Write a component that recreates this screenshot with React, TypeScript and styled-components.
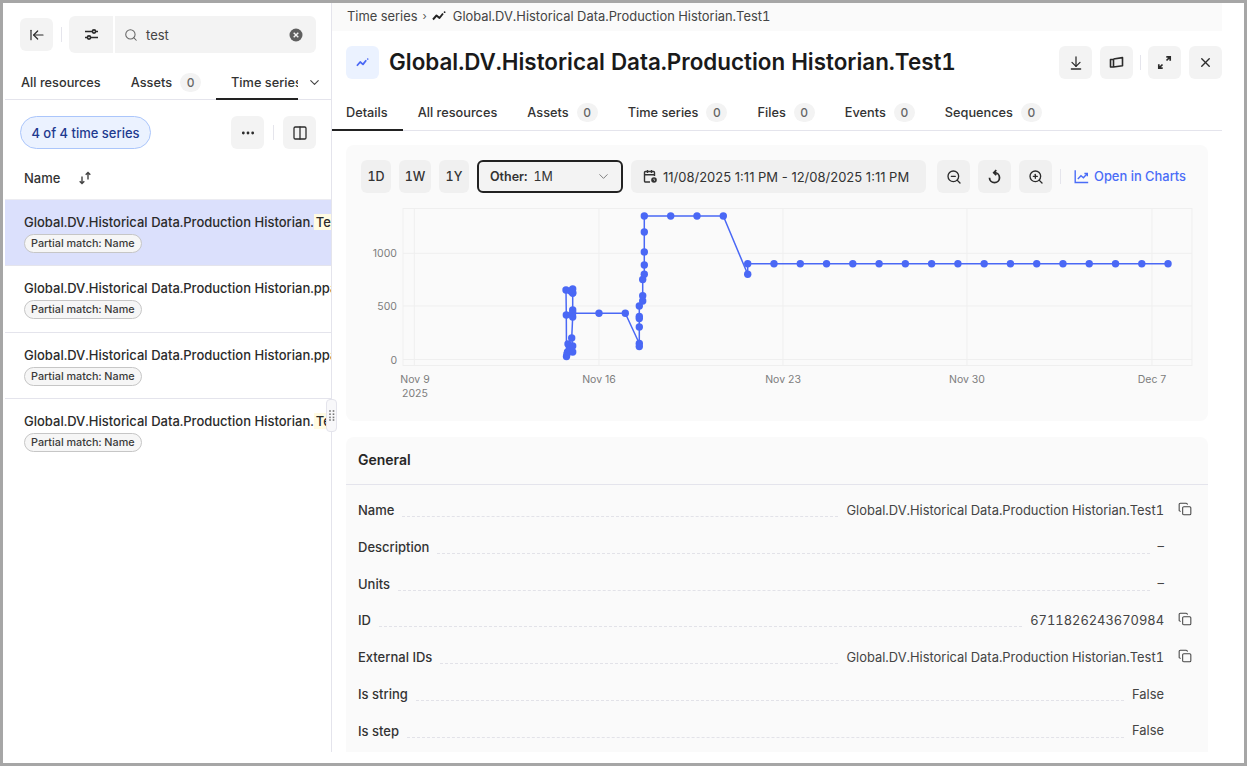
import { ReactNode } from 'react'
import styled, { createGlobalStyle } from 'styled-components'
import {
  ArrowDownToLine,
  ArrowLeftToLine,
  ChevronDown,
  Columns2,
  Copy,
  Ellipsis,
  Search,
  X,
  ZoomIn,
  ZoomOut,
} from 'lucide-react'

const GlobalStyle = createGlobalStyle`
  html, body {
    margin: 0;
    padding: 0;
    background: #fff;
  }
  * {
    box-sizing: border-box;
  }
  body {
    font-family: Inter, "Noto Sans", sans-serif;
    font-variant-numeric: tabular-nums;
    color: #2b2b2b;
    overflow: hidden;
  }
`

const Frame = styled.div`
  width: 1247px;
  height: 766px;
  border: 3px solid #a6a6a6;
  background: #fff;
  display: flex;
  overflow: hidden;
`
const LeftPanel = styled.aside`
  width: 327px;
  height: 749px;
  flex: none;
  margin-left: 2px;
  position: relative;
  border-right: 1px solid #e4e4ec;
`
const ToolRow = styled.div`
  display: flex;
  align-items: center;
  height: 37px;
  margin: 13px 0 0 15px;
`
const IconButton = styled.button<{ $h?: number; $w?: number }>`
  width: ${({ $w }) => $w ?? 33}px;
  height: ${({ $h }) => $h ?? 33}px;
  flex: none;
  border: 0;
  padding: 0;
  border-radius: 6px;
  background: #f3f3f3;
  color: #2b2b2b;
  display: flex;
  align-items: center;
  justify-content: center;
`
const Divider = styled.span<{ $h?: number; $m?: number }>`
  width: 1px;
  height: ${({ $h }) => $h ?? 15}px;
  margin: 0 ${({ $m }) => $m ?? 8}px;
  background: #e5e5ec;
  flex: none;
`
const FilterButton = styled(IconButton)`
  border-radius: 6px 0 0 6px;
  margin-left: -1px;
`
const SearchBox = styled.div`
  width: 201px;
  height: 37px;
  margin-left: 2px;
  padding: 0 13px 0 9px;
  background: #f3f3f3;
  border-radius: 0 6px 6px 0;
  display: flex;
  align-items: center;
  font-size: 13px;
  color: #444;
  span {
    margin-left: 8px;
    flex: 1;
  }
`
const TabBar = styled.div<{ $top: number; $inset?: number; $outset?: number; $h: number }>`
  display: flex;
  height: ${({ $h }) => $h}px;
  margin-top: ${({ $top }) => $top}px;
  margin-left: ${({ $outset }) => -($outset ?? 0)}px;
  padding-left: ${({ $inset }) => $inset ?? 0}px;
  border-bottom: 1px solid #e4e4ec;
`
const Tab = styled.div<{ $active?: boolean; $clip?: number }>`
  flex: none;
  height: ${({ $active }) => ($active ? 'calc(100% + 1px)' : '100%')};
  padding: 2px 15px ${({ $active }) => ($active ? 1 : 0)}px;
  display: flex;
  align-items: center;
  gap: 8px;
  font-size: 12.75px;
  font-weight: 500;
  color: #333;
  white-space: nowrap;
  border-bottom: 2px solid ${({ $active }) => ($active ? '#222' : 'transparent')};
  ${({ $clip }) => ($clip ? `width: ${$clip}px; overflow: hidden; padding-right: 0;` : '')}
`
const Count = styled.span`
  min-width: 21px;
  height: 19px;
  border-radius: 10px;
  background: #f3f3f3;
  color: #666;
  font-size: 12px;
  display: inline-flex;
  align-items: center;
  justify-content: center;
`
const TabMore = styled.div`
  margin-left: 9px;
  padding-top: 1px;
  color: #444;
  display: flex;
  align-items: center;
`
const SummaryRow = styled.div`
  display: flex;
  align-items: center;
  margin: 16px 0 0 15px;
  width: 296px;
`
const Pill = styled.div`
  width: 131px;
  height: 33px;
  border: 1px solid #abc6fb;
  border-radius: 17px;
  background: #ebf2ff;
  color: #1e3a8f;
  font-size: 13px;
  font-weight: 500;
  display: flex;
  align-items: center;
  justify-content: center;
  margin-right: auto;
`
const ListHeader = styled.div`
  height: 51px;
  padding: 8px 0 0 19px;
  display: flex;
  align-items: center;
  font-size: 13px;
  font-weight: 500;
  color: #333;
  gap: 18px;
  border-bottom: 1px solid #ececf1;
`
const ResultRow = styled.div<{ $selected?: boolean; $last?: boolean }>`
  height: 66.4px;
  padding: 13px 0 0 19px;
  white-space: nowrap;
  overflow: hidden;
  background: ${({ $selected }) => ($selected ? '#dbe0fc' : '#fff')};
  border-bottom: 1px solid ${({ $last }) => ($last ? 'transparent' : '#e4e4ec')};
`
const ResultName = styled.div`
  font-size: 13px;
  font-weight: 500;
  line-height: 18px;
  color: #2b2b2b;
  mark {
    background: #fffbe3;
    color: inherit;
    padding-left: 2px;
  }
`
const MatchTag = styled.div`
  display: inline-flex;
  align-items: center;
  height: 19px;
  margin-top: 2px;
  padding: 0 6px;
  border: 1px solid #c6c6c6;
  border-radius: 10px;
  background: #f6f6f6;
  font-size: 10.8px;
  font-weight: 500;
  color: #3a3a3a;
`
const ResizeHandle = styled.div`
  position: absolute;
  right: -6px;
  top: 396px;
  width: 11px;
  height: 33px;
  border: 1px solid #e4e4ec;
  border-radius: 4px;
  background: #f8f8fa;
  display: flex;
  align-items: center;
  justify-content: center;
`
const MainPanel = styled.main`
  width: 890px;
  flex: none;
  display: flex;
  flex-direction: column;
`
const Breadcrumb = styled.div`
  height: 28px;
  flex: none;
  background: #fafafa;
  display: flex;
  align-items: center;
  padding: 0 0 2px 15px;
  font-size: 12.9px;
  color: #444;
  b {
    font-weight: 400;
    margin: 0 5px;
    font-size: 11px;
    color: #555;
  }
  span {
    margin-left: 7px;
  }
`
const TitleRow = styled.div`
  display: flex;
  align-items: center;
  height: 33px;
  flex: none;
  margin: 15px 0 0 14px;
`
const TitleIcon = styled.div`
  width: 33px;
  height: 33px;
  border-radius: 6px;
  background: #ebf2ff;
  display: flex;
  align-items: center;
  justify-content: center;
  flex: none;
`
const Title = styled.h1`
  margin: 0 auto 2px 10px;
  font-size: 22.4px;
  font-weight: 600;
  color: #1a1a1a;
  white-space: nowrap;
`
const ButtonGroup = styled.div`
  display: flex;
  align-items: center;
  gap: 8px;
`
const Content = styled.div`
  margin: 14px 14px 0 14px;
  width: 862px;
`
const Card = styled.section`
  background: #fafafa;
  border-radius: 8px;
`
const ChartCard = styled(Card)`
  height: 276px;
  padding: 15px 0 0 15px;
`
const Controls = styled.div`
  display: flex;
  align-items: center;
  gap: 8px;
  height: 33px;
`
const RangeButton = styled.div<{ $w: number }>`
  width: ${({ $w }) => $w}px;
  height: 33px;
  flex: none;
  border-radius: 6px;
  background: #f0f0f0;
  font-size: 12.5px;
  font-weight: 500;
  color: #333;
  display: flex;
  align-items: center;
  justify-content: center;
`
const RangeSelect = styled.div`
  width: 146px;
  height: 33px;
  flex: none;
  border: 2px solid #222;
  border-radius: 6px;
  background: #f3f3f3;
  padding: 0 10px 0 11px;
  display: flex;
  align-items: center;
  font-size: 12.5px;
  color: #333;
  b {
    font-weight: 600;
    margin-right: 6px;
  }
  svg {
    margin-left: auto;
  }
`
const DateRange = styled.div`
  width: 295px;
  height: 33px;
  flex: none;
  border-radius: 6px;
  background: #f0f0f0;
  margin-right: 3px;
  padding-left: 12px;
  display: flex;
  align-items: center;
  gap: 5px;
  font-size: 13px;
  font-variant-numeric: normal;
  white-space: nowrap;
  color: #333;
`
const ToolButton = styled(IconButton)`
  background: #f0f0f0;
`
const ChartLink = styled.div`
  margin-left: 5px;
  display: flex;
  align-items: center;
  gap: 5px;
  color: #4a6cf7;
  font-size: 12.9px;
  font-weight: 500;
`
const ChartSvg = styled.svg`
  display: block;
  margin: 0 0 0 -15px;
  text {
    font-family: Inter, sans-serif;
    font-size: 10.5px;
    font-variant-numeric: normal;
    fill: #7d7d7d;
  }
`
const GeneralCard = styled(Card)`
  margin-top: 16px;
  height: 315px;
  border-radius: 8px 8px 0 0;
`
const CardTitle = styled.h2`
  margin: 0;
  height: 48px;
  padding: 0 0 2px 12px;
  display: flex;
  align-items: center;
  font-size: 14px;
  font-weight: 600;
  color: #262626;
  border-bottom: 1px solid #e4e4ec;
`
const Fields = styled.div`
  padding-top: 6.6px;
`
const Field = styled.div`
  height: 36.83px;
  display: flex;
  align-items: center;
  padding-left: 12px;
  font-size: 13px;
`
const FieldLabel = styled.span`
  font-weight: 500;
  color: #333;
  flex: none;
`
const Leader = styled.span`
  flex: 1;
  height: 1px;
  margin: 13px 8px 0 8px;
  border-bottom: 1px dashed #e2e2e8;
`
const FieldValue = styled.span`
  color: #444;
  flex: none;
  font-size: 12.9px;
  white-space: nowrap;
`
const CopySlot = styled.span`
  width: 44px;
  flex: none;
  display: flex;
  padding-left: 14px;
  color: #444;
  margin-top: -2px;
`

const SliderIcon = () => (
  <svg width="15" height="15" viewBox="0 0 15 15" fill="none" stroke="#2b2b2b" strokeWidth="1.6">
    <path d="M1 4.5h7.5M11.5 4.5H14M1 10.5h2.5M6.5 10.5H14" />
    <circle cx="10" cy="4.5" r="1.6" />
    <circle cx="5" cy="10.5" r="1.6" />
  </svg>
)

const ClearIcon = () => (
  <svg width="14" height="14" viewBox="0 0 14 14">
    <circle cx="7" cy="7" r="6.5" fill="#5f5f5f" />
    <path d="M4.7 4.7l4.6 4.6M9.3 4.7l-4.6 4.6" stroke="#f3f3f3" strokeWidth="1.4" />
  </svg>
)

const SortIcon = () => (
  <svg width="14" height="14" viewBox="0 0 14 14" fill="none" stroke="#444" strokeWidth="1.4">
    <path d="M4 5.5v7M1.7 10.2 4 12.6l2.3-2.4M10 8.5v-7M7.7 3.8 10 1.4l2.3 2.4" />
  </svg>
)

const SeriesIcon = ({ color, size }: { color: string; size: number }) => (
  <svg width={size} height={size} viewBox="0 0 14 14" fill="none" stroke={color} strokeWidth="1.9">
    <path d="M1 10.5 4.5 6.5 7.5 9 11 4.5" strokeLinejoin="round" />
    <circle cx="12.6" cy="3.2" r="0.9" fill={color} stroke="none" />
  </svg>
)

const GripIcon = () => (
  <svg width="6" height="11" viewBox="0 0 6 11" fill="#777">
    {[1, 4.5].map((x) =>
      [1, 4.2, 7.4, 10].map((y) => <rect key={`${x}-${y}`} x={x - 0.8} y={y - 0.8} width="1.6" height="1.6" />),
    )}
  </svg>
)

const CanvasIcon = () => (
  <svg width="15" height="15" viewBox="0 0 15 15" fill="none" stroke="#2b2b2b" strokeWidth="1.6">
    <path d="M1.5 4.5h3v7.5h-3zM4.5 4 13.5 2.6v8.2l-9 1.2" strokeLinejoin="round" />
  </svg>
)

const ExpandIcon = () => (
  <svg width="15" height="15" viewBox="0 0 15 15" fill="none" stroke="#2b2b2b" strokeWidth="1.7">
    <path d="M9.5 5.5 13 2M9.3 1.8h3.9v3.9M5.5 9.5 2 13M1.8 9.3v3.9h3.9" />
  </svg>
)

const CalendarIcon = () => (
  <svg width="15" height="15" viewBox="0 0 15 15" fill="none" stroke="#333" strokeWidth="1.4">
    <path d="M7 13H2.5a1 1 0 0 1-1-1V3.5a1 1 0 0 1 1-1h8a1 1 0 0 1 1 1V7M1.5 5.8h10M4.5 1v3M8.5 1v3" />
    <circle cx="11" cy="11" r="2.8" fill="#333" stroke="none" />
    <path d="M11 9.7V11l.9.7" stroke="#f0f0f0" strokeWidth="0.8" />
  </svg>
)

const ResetIcon = () => (
  <svg width="15" height="15" viewBox="0 0 15 15" fill="none" stroke="#2b2b2b" strokeWidth="1.8">
    <path d="M7.5 3.7a5 5 0 1 1-5 5" />
    <path d="M9.3 1.2 6.8 3.7l2.5 2.5" />
  </svg>
)

const ChartsIcon = () => (
  <svg width="15" height="15" viewBox="0 0 15 15" fill="none" stroke="currentColor" strokeWidth="1.4">
    <path d="M1.2 1.2v12.3h13" />
    <path d="M3.8 10 7 6.8l2.4 1.9 3.7-3.9" />
    <path d="M10.4 4.5h2.9v2.8" />
  </svg>
)

const lowerPoints: [number, number][] = [
  [566, 290], [566.3, 315], [566.5, 356.5], [567, 354], [567.5, 352], [568, 344], [570, 350],
  [572.7, 352], [572.7, 346], [571.7, 338], [572.7, 317], [572.7, 293], [572.7, 289], [570.5, 291],
  [572.7, 293], [572.7, 310], [572.7, 313], [599, 313.3], [625.3, 313.3], [639.3, 343.5], [639.3, 346.5],
  [639.3, 327], [639.3, 318.5], [639.3, 316.5], [639.3, 306], [642.7, 301], [642.7, 295.7], [642.7, 279.5],
  [644.3, 274.3], [644.3, 265], [644.3, 252], [644.3, 232], [644.3, 216], [670.7, 216], [697, 216], [723.3, 216],
  [747.7, 274.3], [747.7, 263.7],
]
const flatPoints: [number, number][] = Array.from({ length: 16 }, (_, i) => [774 + i * 26.27, 263.7])
const chartPoints = [...lowerPoints, ...flatPoints]

const gridX = [414.3, 599, 783, 967, 1152]
const gridY = [253.3, 306, 359.5]

// viewBox uses page coordinates, the svg sits at (346, 193)
const SeriesChart = () => (
  <ChartSvg width="862" height="228" viewBox="346 193 862 228">
    <rect x="403" y="208.5" width="789" height="157" fill="none" stroke="#efefef" />
    {gridX.map((x) => (
      <line key={x} x1={x} x2={x} y1="208" y2="366" stroke="#efefef" />
    ))}
    {gridY.map((y) => (
      <line key={y} x1="403" x2="1192" y1={y} y2={y} stroke="#efefef" />
    ))}
    <text x="397" y="257" textAnchor="end">1000</text>
    <text x="397" y="310" textAnchor="end">500</text>
    <text x="397" y="363.5" textAnchor="end">0</text>
    <text x="415" y="383" textAnchor="middle">Nov 9</text>
    <text x="415" y="397" textAnchor="middle">2025</text>
    <text x="599" y="383" textAnchor="middle">Nov 16</text>
    <text x="783" y="383" textAnchor="middle">Nov 23</text>
    <text x="967" y="383" textAnchor="middle">Nov 30</text>
    <text x="1152" y="383" textAnchor="middle">Dec 7</text>
    <polyline
      points={chartPoints.map((p) => p.join(',')).join(' ')}
      fill="none"
      stroke="#4a68f5"
      strokeWidth="1.5"
      strokeLinejoin="round"
    />
    {chartPoints.map(([x, y], i) => (
      <circle key={i} cx={x} cy={y} r="3.7" fill="#4a68f5" />
    ))}
  </ChartSvg>
)

const fields: { label: string; value: string; copy?: boolean }[] = [
  { label: 'Name', value: 'Global.DV.Historical Data.Production Historian.Test1', copy: true },
  { label: 'Description', value: '–' },
  { label: 'Units', value: '–' },
  { label: 'ID', value: '6711826243670984', copy: true },
  { label: 'External IDs', value: 'Global.DV.Historical Data.Production Historian.Test1', copy: true },
  { label: 'Is string', value: 'False' },
  { label: 'Is step', value: 'False' },
]

const results: { name: ReactNode; selected?: boolean; last?: boolean }[] = [
  { name: <>Global.DV.Historical Data.Production Historian.<mark>Test1</mark></>, selected: true },
  { name: 'Global.DV.Historical Data.Production Historian.ppa_test_series' },
  { name: 'Global.DV.Historical Data.Production Historian.ppa_test_values' },
  { name: <>Global.DV.Historical Data.Production Historian.<mark>Test2</mark></>, last: true },
]

const detailTabs: { label: string; count?: number; active?: boolean }[] = [
  { label: 'Details', active: true },
  { label: 'All resources' },
  { label: 'Assets', count: 0 },
  { label: 'Time series', count: 0 },
  { label: 'Files', count: 0 },
  { label: 'Events', count: 0 },
  { label: 'Sequences', count: 0 },
]

const App = () => {
  return (
    <Frame>
      <GlobalStyle />
      <LeftPanel>
        <ToolRow>
          <IconButton>
            <ArrowLeftToLine size={16} strokeWidth={1.8} />
          </IconButton>
          <Divider />
          <FilterButton $w={44} $h={37}>
            <SliderIcon />
          </FilterButton>
          <SearchBox>
            <Search size={14} color="#666" strokeWidth={1.8} />
            <span>test</span>
            <ClearIcon />
          </SearchBox>
        </ToolRow>
        <TabBar $top={12} $h={35} $inset={1}>
          <Tab>All resources</Tab>
          <Tab>
            Assets <Count>0</Count>
          </Tab>
          <Tab $active $clip={82}>
            Time series
          </Tab>
          <TabMore>
            <ChevronDown size={15} strokeWidth={1.8} />
          </TabMore>
        </TabBar>
        <SummaryRow>
          <Pill>4 of 4 time series</Pill>
          <IconButton>
            <Ellipsis size={16} strokeWidth={2.2} />
          </IconButton>
          <Divider $m={9} />
          <IconButton>
            <Columns2 size={16} strokeWidth={1.9} />
          </IconButton>
        </SummaryRow>
        <ListHeader>
          <span>Name</span>
          <SortIcon />
        </ListHeader>
        {results.map((row, i) => (
          <ResultRow key={i} $selected={row.selected} $last={row.last}>
            <ResultName>{row.name}</ResultName>
            <MatchTag>Partial match: Name</MatchTag>
          </ResultRow>
        ))}
        <ResizeHandle>
          <GripIcon />
        </ResizeHandle>
      </LeftPanel>
      <MainPanel>
        <Breadcrumb>
          Time series<b>›</b>
          <SeriesIcon color="#222" size={14} />
          <span>Global.DV.Historical Data.Production Historian.Test1</span>
        </Breadcrumb>
        <TitleRow>
          <TitleIcon>
            <SeriesIcon color="#4a68f5" size={13} />
          </TitleIcon>
          <Title>Global.DV.Historical Data.Production Historian.Test1</Title>
          <ButtonGroup>
            <IconButton>
              <ArrowDownToLine size={16} strokeWidth={1.9} />
            </IconButton>
            <IconButton>
              <CanvasIcon />
            </IconButton>
          </ButtonGroup>
          <Divider $m={7} />
          <ButtonGroup>
            <IconButton>
              <ExpandIcon />
            </IconButton>
            <IconButton>
              <X size={15} strokeWidth={2.2} />
            </IconButton>
          </ButtonGroup>
        </TitleRow>
        <TabBar $top={16} $h={36} $outset={1}>
          {detailTabs.map((t) => (
            <Tab key={t.label} $active={t.active}>
              {t.label}
              {t.count !== undefined && <Count>{t.count}</Count>}
            </Tab>
          ))}
        </TabBar>
        <Content>
          <ChartCard>
            <Controls>
              <RangeButton $w={30}>1D</RangeButton>
              <RangeButton $w={32}>1W</RangeButton>
              <RangeButton $w={30}>1Y</RangeButton>
              <RangeSelect>
                <b>Other:</b> 1M
                <ChevronDown size={15} color="#777" strokeWidth={1.5} />
              </RangeSelect>
              <DateRange>
                <CalendarIcon />
                11/08/2025 1:11 PM - 12/08/2025 1:11 PM
              </DateRange>
              <ToolButton>
                <ZoomOut size={16} strokeWidth={2} />
              </ToolButton>
              <ToolButton>
                <ResetIcon />
              </ToolButton>
              <ToolButton>
                <ZoomIn size={16} strokeWidth={2} />
              </ToolButton>
              <Divider $m={0} />
              <ChartLink>
                <ChartsIcon />
                Open in Charts
              </ChartLink>
            </Controls>
            <SeriesChart />
          </ChartCard>
          <GeneralCard>
            <CardTitle>General</CardTitle>
            <Fields>
              {fields.map((f) => (
                <Field key={f.label}>
                  <FieldLabel>{f.label}</FieldLabel>
                  <Leader />
                  <FieldValue>{f.value}</FieldValue>
                  <CopySlot>{f.copy && <Copy size={14} strokeWidth={1.8} />}</CopySlot>
                </Field>
              ))}
            </Fields>
          </GeneralCard>
        </Content>
      </MainPanel>
    </Frame>
  )
}

export default App
